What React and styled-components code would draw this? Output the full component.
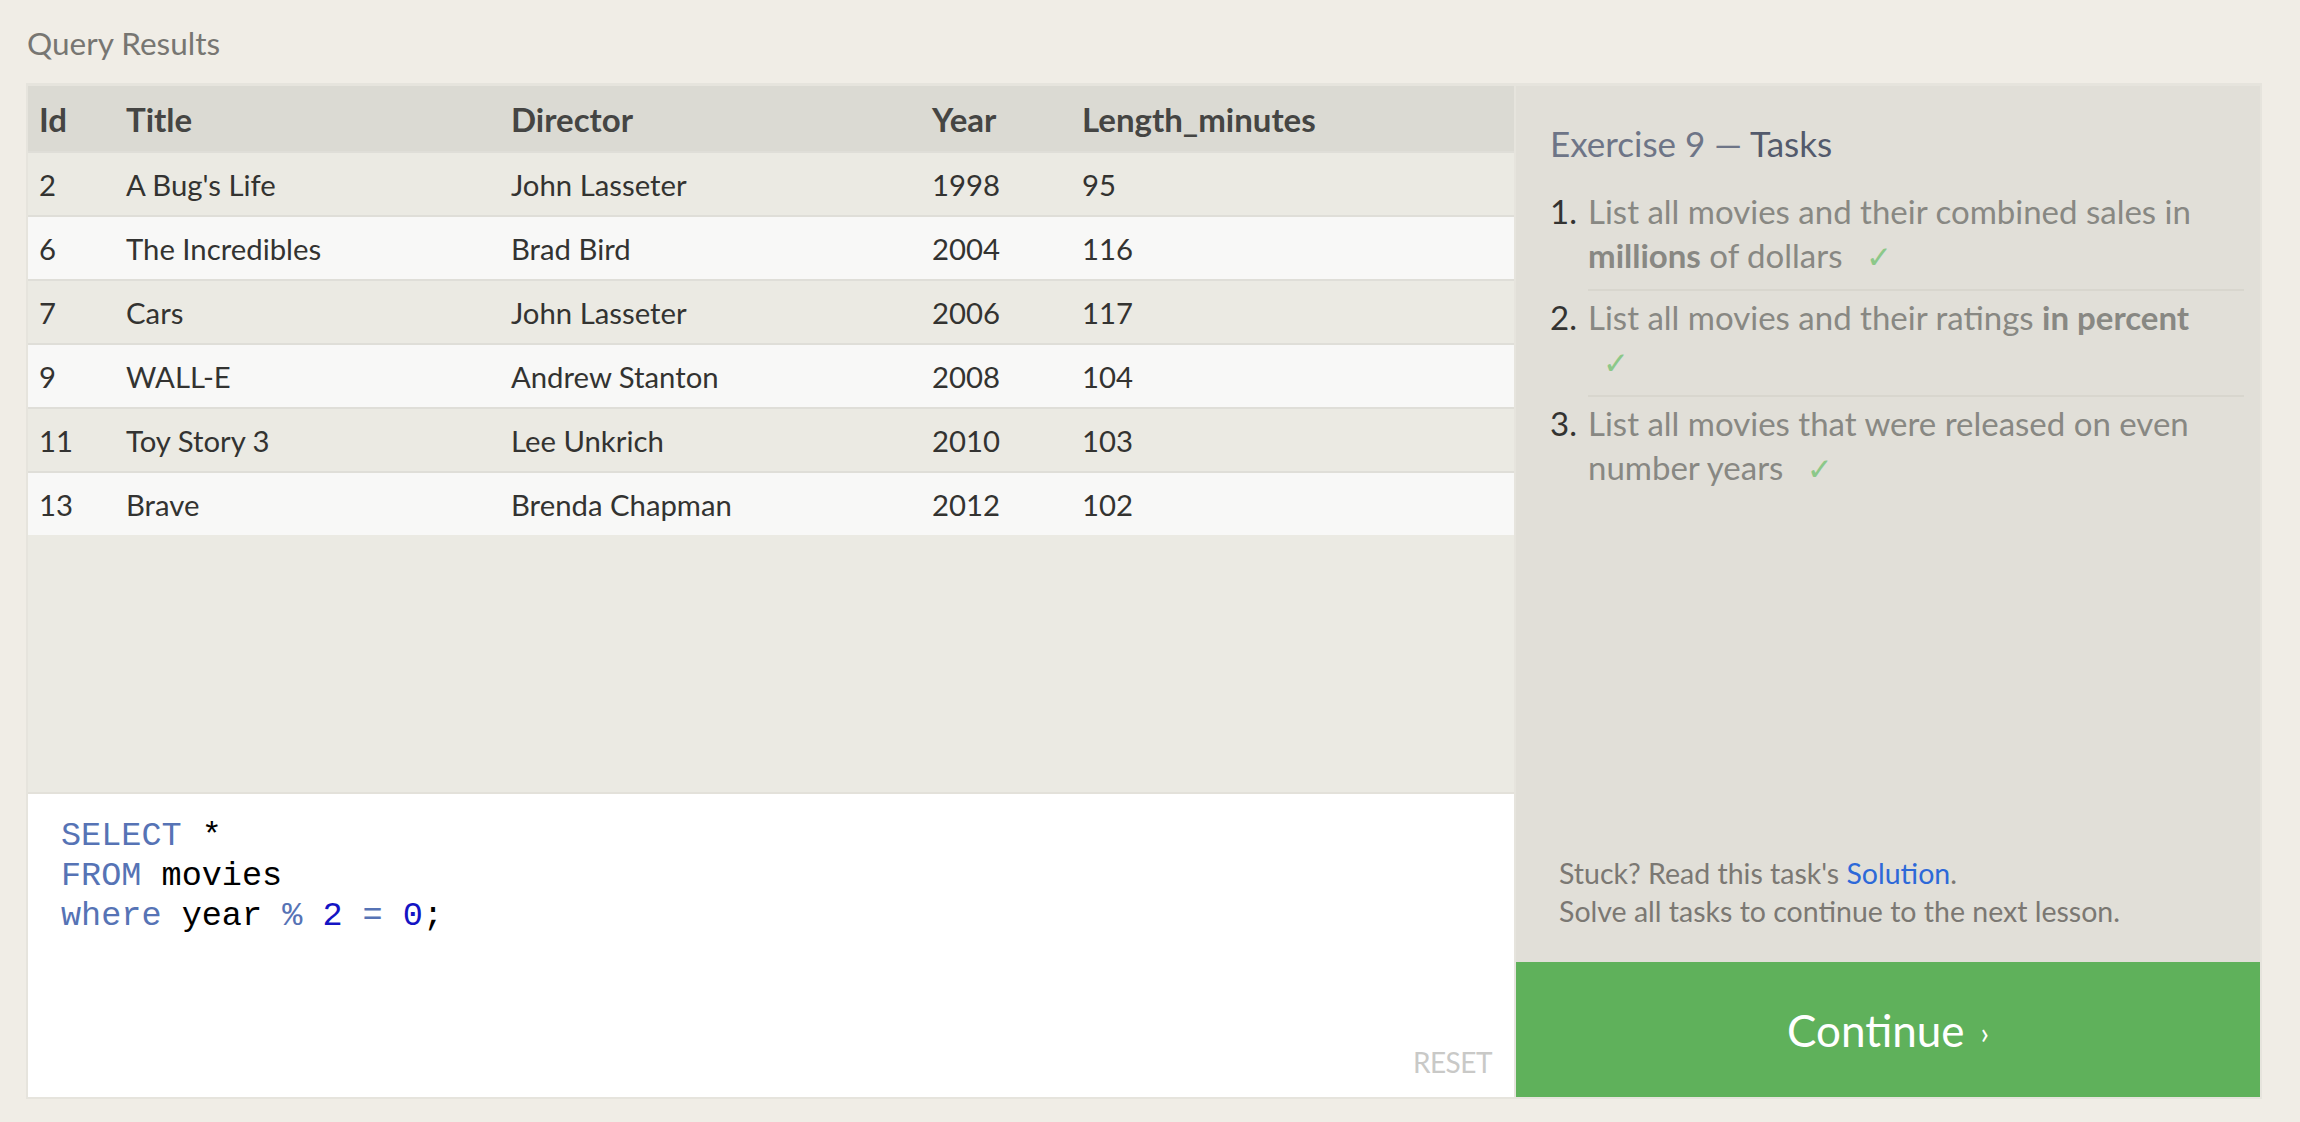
import React from 'react';
import styled, { createGlobalStyle } from 'styled-components';

const GlobalStyle = createGlobalStyle`
  html, body {
    margin: 0;
    padding: 0;
    background: #f0ede6;
  }
  body {
    font-family: Lato, "Open Sans", "DejaVu Sans", sans-serif;
    -webkit-font-smoothing: antialiased;
  }
`;

const Page = styled.div`
  width: 2300px;
  height: 1122px;
  box-sizing: border-box;
  padding: 25px 38px 0 26px;
`;

const SectionTitle = styled.div`
  font-size: 31.5px;
  line-height: 36px;
  color: #777672;
  margin: 0 0 22px 1px;
`;

const Workspace = styled.div`
  display: grid;
  grid-template-columns: 1486px 1fr;
  height: 1016px;
  box-sizing: border-box;
  border: 2px solid #e6e4dd;
  border-top-width: 3px;
`;

const LeftColumn = styled.div`
  display: flex;
  flex-direction: column;
  min-height: 0;
`;

const ResultsArea = styled.div`
  flex: 1;
  background: #ebeae3;
`;

const Row = styled.div`
  display: grid;
  grid-template-columns: 87px 385px 421px 150px 1fr;
  align-items: center;
  height: ${(p) => (p.$header ? '65px' : '62px')};
  background: ${(p) => (p.$header ? '#dbdad3' : p.$even ? '#f8f8f7' : '#ebeae3')};
  border-top: ${(p) => (p.$header ? 'none' : '2px solid #dfded8')};
  color: ${(p) => (p.$header ? '#454543' : '#333331')};
  font-size: ${(p) => (p.$header ? '33px' : '29.3px')};
  font-weight: ${(p) => (p.$header ? 700 : 400)};
`;

const Cell = styled.div`
  padding-left: 11px;
  white-space: nowrap;
`;

const Editor = styled.div`
  height: 305px;
  box-sizing: border-box;
  background: #ffffff;
  border-top: 2px solid #e3e1da;
  padding: 22px 22px 18px 33px;
  display: flex;
  flex-direction: column;
`;

const Code = styled.pre`
  margin: 0;
  font-family: "Liberation Mono", "Courier New", monospace;
  font-size: 33.5px;
  line-height: 40px;
  color: #000000;
`;

const Token = styled.span`
  color: ${(p) =>
    p.$kind === 'keyword' ? '#5673b5' : p.$kind === 'number' ? '#1414c4' : '#000000'};
`;

const ResetButton = styled.div`
  margin-top: auto;
  align-self: flex-end;
  font-size: 28px;
  line-height: 34px;
  color: #c9c9c7;
  letter-spacing: -0.5px;
`;

const TasksPanel = styled.div`
  display: flex;
  flex-direction: column;
  background: #e1dfd8;
  border-left: 2px solid #e6e4dd;
`;

const TasksHeader = styled.h2`
  margin: 0;
  padding: 36px 16px 0 34px;
  font-size: 35px;
  line-height: 42px;
  font-weight: 400;
  color: #6e7587;
`;

const TasksStrong = styled.span`
  color: #535a6c;
`;

const TaskList = styled.ol`
  list-style: none;
  margin: 21px 16px 0 34px;
  padding: 0;
`;

const TaskItem = styled.li`
  display: grid;
  grid-template-columns: 38px 1fr;
  align-items: start;
  font-size: 33px;
  line-height: 44px;
`;

const TaskNumber = styled.span`
  padding-top: 4px;
  color: #333331;
`;

const TaskBody = styled.div`
  padding: 4px 0 12px;
  color: #888883;
  border-bottom: ${(p) => (p.$last ? 'none' : '2px solid #d8d6ce')};
  b {
    font-weight: 700;
  }
`;

const Check = styled.span`
  margin-left: 15px;
  color: #8cc889;
  font-family: "DejaVu Sans", sans-serif;
  font-size: 31px;
  line-height: 0;
`;

const Spacer = styled.div`
  flex: 1;
`;

const HelpText = styled.div`
  padding: 0 16px 32px 43px;
  font-size: 28.5px;
  line-height: 38px;
  color: #7b7873;
`;

const SolutionLink = styled.a`
  color: #2d69d8;
  text-decoration: none;
`;

const ContinueButton = styled.div`
  height: 135px;
  display: flex;
  align-items: center;
  justify-content: center;
  background: #5fb15b;
  color: #ffffff;
  font-size: 44px;
`;

const Chevron = styled.span`
  font-size: 30px;
  margin-left: 16px;
  position: relative;
  top: 2px;
`;

const movies = [
  [2, "A Bug's Life", 'John Lasseter', 1998, 95],
  [6, 'The Incredibles', 'Brad Bird', 2004, 116],
  [7, 'Cars', 'John Lasseter', 2006, 117],
  [9, 'WALL-E', 'Andrew Stanton', 2008, 104],
  [11, 'Toy Story 3', 'Lee Unkrich', 2010, 103],
  [13, 'Brave', 'Brenda Chapman', 2012, 102],
];

const headers = ['Id', 'Title', 'Director', 'Year', 'Length_minutes'];

export default function App() {
  return (
    <>
      <GlobalStyle />
      <Page>
        <SectionTitle>Query Results</SectionTitle>
        <Workspace>
          <LeftColumn>
            <ResultsArea>
              <Row $header>
                {headers.map((h) => (
                  <Cell key={h}>{h}</Cell>
                ))}
              </Row>
              {movies.map((m, i) => (
                <Row key={m[0]} $even={i % 2 === 1}>
                  {m.map((v, j) => (
                    <Cell key={j}>{v}</Cell>
                  ))}
                </Row>
              ))}
            </ResultsArea>
            <Editor>
              <Code>
                <Token $kind="keyword">SELECT</Token> *{'\n'}
                <Token $kind="keyword">FROM</Token> movies{'\n'}
                <Token $kind="keyword">where</Token> year <Token $kind="keyword">%</Token>{' '}
                <Token $kind="number">2</Token> <Token $kind="keyword">=</Token>{' '}
                <Token $kind="number">0</Token>;
              </Code>
              <ResetButton>RESET</ResetButton>
            </Editor>
          </LeftColumn>
          <TasksPanel>
            <TasksHeader>
              Exercise 9 — <TasksStrong>Tasks</TasksStrong>
            </TasksHeader>
            <TaskList>
              <TaskItem>
                <TaskNumber>1.</TaskNumber>
                <TaskBody>
                  List all movies and their combined sales in <b>millions</b> of dollars{' '}
                  <Check>✓</Check>
                </TaskBody>
              </TaskItem>
              <TaskItem>
                <TaskNumber>2.</TaskNumber>
                <TaskBody>
                  List all movies and their ratings <b>in percent</b>
                  <br />
                  <Check>✓</Check>
                </TaskBody>
              </TaskItem>
              <TaskItem>
                <TaskNumber>3.</TaskNumber>
                <TaskBody $last>
                  List all movies that were released on even number years{' '}
                  <Check>✓</Check>
                </TaskBody>
              </TaskItem>
            </TaskList>
            <Spacer />
            <HelpText>
              Stuck? Read this task's <SolutionLink href="#">Solution</SolutionLink>.
              <br />
              Solve all tasks to continue to the next lesson.
            </HelpText>
            <ContinueButton>
              Continue<Chevron>›</Chevron>
            </ContinueButton>
          </TasksPanel>
        </Workspace>
      </Page>
    </>
  );
}
